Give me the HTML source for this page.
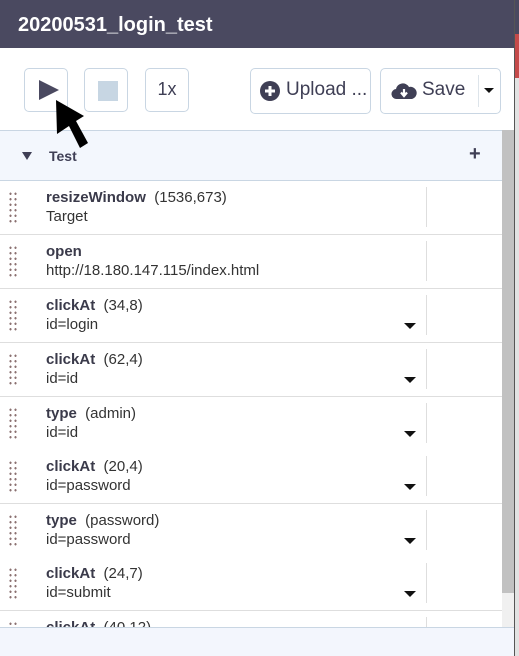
<!DOCTYPE html>
<html style="overflow:hidden"><head><style>
*{box-sizing:border-box;margin:0;padding:0}
html,body{width:519px;height:656px;overflow:hidden}
body{font-family:"Liberation Sans",sans-serif;background:#fff;position:relative}
.hdr{position:absolute;left:0;top:0;width:514px;height:48px;background:#4a4960;color:#fff;font-weight:bold;font-size:20px;padding:14px 0 0 18px}
.edge{position:absolute;left:514px;top:0;width:5px;height:656px;background:#e2e2e2;border-left:1px solid #555}
.edge .a{position:absolute;left:0;top:0;width:5px;height:34px;background:#4a4960}
.edge .b{position:absolute;left:0;top:34px;width:5px;height:44px;background:#c54a4a}
.btn{position:absolute;border:1px solid #c9d6e3;border-radius:5px;background:#fff;color:#3f3f55;font-size:18px}
.tb{position:absolute;left:0;top:48px;width:514px;height:82px;background:#fff}
.testh{position:absolute;left:0;top:130px;width:502px;height:51px;background:#f3f7fd;border-top:1px solid #c9d6e3;border-bottom:1px solid #c9d6e3}
.sb{position:absolute;left:502px;top:130px;width:12px;height:497px;background:#f0f0f0}
.sb div{width:12px;height:463px;background:#c1c1c1}
.list{position:absolute;left:0;top:181px;width:502px;height:446px;overflow:hidden}
.row{position:absolute;left:0;width:502px;height:54px;border-bottom:1px solid #dedede;background:#fff}
.row .dots{position:absolute;left:8px;top:10px;width:10px;height:34px;background-image:radial-gradient(circle,#8a7070 1px,transparent 1.3px);background-size:5px 5.5px}
.row .c{position:absolute;left:46px;top:8px;font-size:15px;color:#333}
.row .c b{color:#3a3a4a}
.row .t{position:absolute;left:46px;top:27px;font-size:15px;color:#333}
.row .sep{position:absolute;left:426px;top:6px;width:1px;height:40px;background:#dedede}
.row .car{position:absolute;left:404px;top:34px;width:0;height:0;border-left:6px solid transparent;border-right:6px solid transparent;border-top:6px solid #111}
.foot{position:absolute;left:0;top:627px;width:514px;height:29px;background:#f3f6fd;border-top:1px solid #c9d6e3}
</style></head><body>
<div class="hdr">20200531_login_test</div>
<div class="edge"><div class="a"></div><div class="b"></div></div>
<div class="tb"></div>
<div class="btn" style="left:24px;top:68px;width:44px;height:44px"><svg width="44" height="44" style="position:absolute;left:-1px;top:-1px"><path d="M15 12 L35 22 L15 32Z" fill="#4a4960"/></svg></div>
<div class="btn" style="left:84px;top:68px;width:44px;height:44px"><div style="position:absolute;left:13px;top:12px;width:20px;height:20px;background:#c7d6e3"></div></div>
<div class="btn" style="left:145px;top:68px;width:44px;height:44px;text-align:center;line-height:40px">1x</div>
<div class="btn" style="left:250px;top:68px;width:121px;height:46px;line-height:42px;padding-left:35px;font-size:19px">Upload ...<svg width="20" height="20" style="position:absolute;left:9px;top:12px"><circle cx="10" cy="10" r="10" fill="#3f3f55"/><path d="M10 5V15M5 10H15" stroke="#fff" stroke-width="3"/></svg></div>
<div class="btn" style="left:380px;top:68px;width:121px;height:46px;line-height:42px;padding-left:41px;font-size:19px">Save<svg width="26" height="20" style="position:absolute;left:10px;top:12px"><path d="M6 18 A5 5 0 0 1 5 8 A7 7 0 0 1 18 6 A6 6 0 0 1 21 18Z" fill="#3f3f55"/><path d="M13 8V14M10 11.5L13 15L16 11.5" stroke="#fff" stroke-width="2.2" fill="none"/></svg><div style="position:absolute;left:97px;top:6px;width:1px;height:32px;background:#dde4ea"></div><div style="position:absolute;left:103px;top:19px;border-left:5px solid transparent;border-right:5px solid transparent;border-top:5px solid #111"></div></div>
<div class="testh"><div style="position:absolute;left:22px;top:21px;border-left:5px solid transparent;border-right:5px solid transparent;border-top:8px solid #3f3f55"></div><b style="position:absolute;left:49px;top:17px;font-size:14px;color:#3f3f55">Test</b><b style="position:absolute;left:469px;top:12px;font-size:20px;color:#3f3f55">+</b></div>
<div class="list">
<div class="row" style="top:0px"><div class="dots"></div><div class="c"><b>resizeWindow</b>&nbsp; (1536,673)</div><div class="t">Target</div><div class="sep"></div></div>
<div class="row" style="top:54px"><div class="dots"></div><div class="c"><b>open</b></div><div class="t">http://18.180.147.115/index.html</div><div class="sep"></div></div>
<div class="row" style="top:108px"><div class="dots"></div><div class="c"><b>clickAt</b>&nbsp; (34,8)</div><div class="t">id=login</div><div class="car"></div><div class="sep"></div></div>
<div class="row" style="top:162px"><div class="dots"></div><div class="c"><b>clickAt</b>&nbsp; (62,4)</div><div class="t">id=id</div><div class="car"></div><div class="sep"></div></div>
<div class="row" style="top:216px"><div class="dots"></div><div class="c"><b>type</b>&nbsp; (admin)</div><div class="t">id=id</div><div class="car"></div><div class="sep"></div></div>
<div class="row" style="top:269px"><div class="dots"></div><div class="c"><b>clickAt</b>&nbsp; (20,4)</div><div class="t">id=password</div><div class="car"></div><div class="sep"></div></div>
<div class="row" style="top:323px"><div class="dots"></div><div class="c"><b>type</b>&nbsp; (password)</div><div class="t">id=password</div><div class="car"></div><div class="sep"></div></div>
<div class="row" style="top:376px"><div class="dots"></div><div class="c"><b>clickAt</b>&nbsp; (24,7)</div><div class="t">id=submit</div><div class="car"></div><div class="sep"></div></div>
<div class="row" style="top:430px"><div class="dots"></div><div class="c"><b>clickAt</b>&nbsp; (40,12)</div><div class="sep"></div></div>
</div>
<div class="sb"><div></div></div>
<div class="foot"></div>
<svg width="519" height="656" style="position:absolute;left:0;top:0;pointer-events:none"><path d="M56 100 L84 116 L76 121 L88 143 L80 148 L69 126 L57 134Z" fill="#000"/></svg>
</body></html>
